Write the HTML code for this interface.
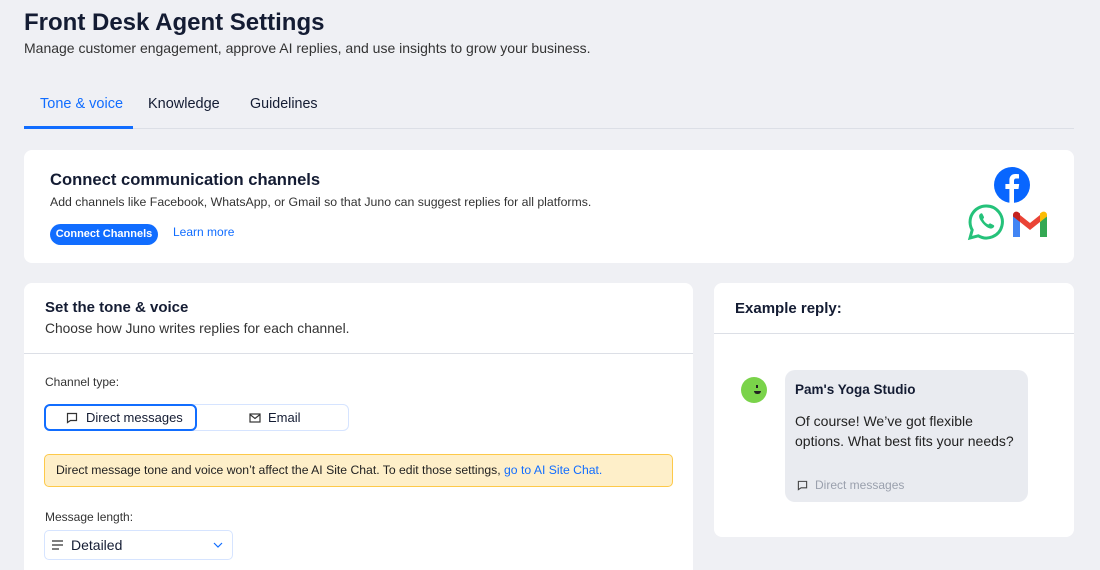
<!DOCTYPE html>
<html><head><style>
*{box-sizing:border-box;margin:0;padding:0}
html,body{width:1100px;height:570px;overflow:hidden}
body{background:#eff0f4;font-family:"Liberation Sans",sans-serif;color:#141c33;position:relative}
.a{position:absolute}
.card{position:absolute;background:#fff;border-radius:8px}
</style></head><body>
<div class="a" style="left:24px;top:9px;font-size:24px;font-weight:bold">Front Desk Agent Settings</div>
<div class="a" style="left:24px;top:40px;font-size:14px;color:#333">Manage customer engagement, approve AI replies, and use insights to grow your business.</div>
<div class="a" style="left:24px;top:128px;width:1050px;height:1px;background:#dcdfe6"></div>
<div class="a" style="left:24px;top:126px;width:109px;height:3px;background:#116dff"></div>
<div class="a" style="left:40px;top:96px;font-size:14.5px;color:#116dff">Tone &amp; voice</div>
<div class="a" style="left:148px;top:96px;font-size:14.5px">Knowledge</div>
<div class="a" style="left:250px;top:96px;font-size:14.3px">Guidelines</div>

<div class="card" style="left:24px;top:150px;width:1050px;height:113px"></div>
<div class="a" style="left:50px;top:170px;font-size:16.6px;font-weight:bold">Connect communication channels</div>
<div class="a" style="left:50px;top:195px;font-size:12.3px;color:#333">Add channels like Facebook, WhatsApp, or Gmail so that Juno can suggest replies for all platforms.</div>
<div class="a" style="left:50px;top:224px;width:108px;height:21px;background:#116dff;border-radius:11px;color:#fff;font-size:11px;font-weight:bold;text-align:center;line-height:21px">Connect Channels</div>
<div class="a" style="left:173px;top:225px;font-size:12px;color:#116dff">Learn more</div>
<svg class="a" style="left:993px;top:166px" width="38" height="38" viewBox="0 0 38 38"><circle cx="19" cy="19" r="18" fill="#0866ff"/><path d="M21 37V23h4.5l.7-5H21v-3c0-1.5.5-2.5 2.6-2.5H26V8.2c-.5-.1-2-.2-3.6-.2-3.6 0-6 2.2-6 6.1V18h-4v5h4v14z" fill="#fff"/></svg>
<svg class="a" style="left:967px;top:203px" width="38" height="38" viewBox="0 0 38 38"><path d="M19 3a16 16 0 0 0-13.8 24L3 35l8.3-2.2A16 16 0 1 0 19 3z" fill="none" stroke="#25c27a" stroke-width="3"/><path d="M13 11c1-1 2-1 2.5 0l1.5 3c.3.7-.5 1.5-1 2 1 2.5 3 4.5 5.5 5.5.5-.5 1.3-1.3 2-1l3 1.5c1 .5 1 1.5 0 2.5-2 2-5 1-8-1.5S10 14 13 11z" fill="#25c27a"/></svg>
<svg class="a" style="left:1012px;top:210px" width="36" height="28" viewBox="0 0 36 28"><path d="M1 5v22h7V12z" fill="#4285f4"/><path d="M28 12v15h7V5z" fill="#34a853"/><path d="M8 5v7l10 8 10-8V5L18 13z" fill="#ea4335"/><path d="M1 5c0-3 3-4 5-3l2 1.5V12L1 6.5z" fill="#c5221f"/><path d="M35 5c0-3-3-4-5-3l-2 1.5V12l7-5.5z" fill="#fbbc04"/></svg>

<div class="card" style="left:24px;top:283px;width:669px;height:300px"></div>
<div class="a" style="left:45px;top:299px;font-size:15px;font-weight:bold">Set the tone &amp; voice</div>
<div class="a" style="left:45px;top:321px;font-size:13.8px;color:#333">Choose how Juno writes replies for each channel.</div>
<div class="a" style="left:24px;top:353px;width:669px;height:1px;background:#dcdfe6"></div>
<div class="a" style="left:45px;top:375px;font-size:12px;color:#333">Channel type:</div>
<div class="a" style="left:44px;top:404px;width:305px;height:27px;border:1px solid #d6e4ff;border-radius:6px"></div>
<div class="a" style="left:44px;top:404px;width:153px;height:27px;border:2px solid #116dff;border-radius:6px;font-size:13px;line-height:23px;padding-left:40px">Direct messages</div>
<svg class="a" style="left:66px;top:412px" width="12" height="12" viewBox="0 0 12 12"><path d="M1.5 1.5h9v7h-6l-3 2z" fill="none" stroke="#333" stroke-width="1.2"/></svg>
<div class="a" style="left:268px;top:410px;font-size:13px">Email</div>
<svg class="a" style="left:249px;top:413px" width="12" height="10" viewBox="0 0 12 10"><rect x="1" y="1" width="10" height="8" fill="none" stroke="#333" stroke-width="1.2"/><path d="M1 1.5l5 4 5-4" fill="none" stroke="#333" stroke-width="1.2"/></svg>
<div class="a" style="left:44px;top:454px;width:629px;height:33px;background:#feefc9;border:1px solid #fdc94a;border-radius:5px;font-size:12.2px;line-height:31px;padding-left:11px;color:#222">Direct message tone and voice won’t affect the AI Site Chat. To edit those settings, <span style="color:#116dff">go to AI Site Chat.</span></div>
<div class="a" style="left:45px;top:510px;font-size:12px;color:#333">Message length:</div>
<div class="a" style="left:44px;top:530px;width:189px;height:30px;border:1px solid #d6e4ff;border-radius:5px;font-size:14px;line-height:28px;padding-left:26px">Detailed</div>
<svg class="a" style="left:52px;top:540px" width="12" height="10" viewBox="0 0 12 10"><path d="M0 1h11M0 5h11M0 9h7" stroke="#333" stroke-width="1.3"/></svg>
<svg class="a" style="left:213px;top:542px" width="10" height="6" viewBox="0 0 10 6"><path d="M1 1l4 4 4-4" fill="none" stroke="#116dff" stroke-width="1.2"/></svg>

<div class="card" style="left:714px;top:283px;width:360px;height:254px"></div>
<div class="a" style="left:735px;top:300px;font-size:15px;font-weight:bold">Example reply:</div>
<div class="a" style="left:714px;top:333px;width:360px;height:1px;background:#dcdfe6"></div>
<div class="a" style="left:741px;top:377px;width:26px;height:26px;border-radius:50%;background:#7ad34a"></div>
<div class="a" style="left:756px;top:385px;width:2px;height:3px;background:#222"></div>
<div class="a" style="left:754px;top:391px;width:7px;height:3px;border-radius:0 0 4px 4px;background:#222"></div>
<div class="card" style="left:785px;top:370px;width:243px;height:132px;background:#e9ebf0;border-radius:10px"></div>
<div class="a" style="left:795px;top:382px;font-size:13.5px;font-weight:bold">Pam's Yoga Studio</div>
<div class="a" style="left:795px;top:411px;font-size:14px;line-height:20px;color:#222">Of course! We’ve got flexible<br>options. What best fits your needs?</div>
<svg class="a" style="left:797px;top:480px" width="11" height="11" viewBox="0 0 12 12"><path d="M1.5 1.5h9v7h-6l-3 2z" fill="none" stroke="#444" stroke-width="1.2"/></svg>
<div class="a" style="left:815px;top:478px;font-size:12px;color:#9aa0ad">Direct messages</div>
</body></html>
